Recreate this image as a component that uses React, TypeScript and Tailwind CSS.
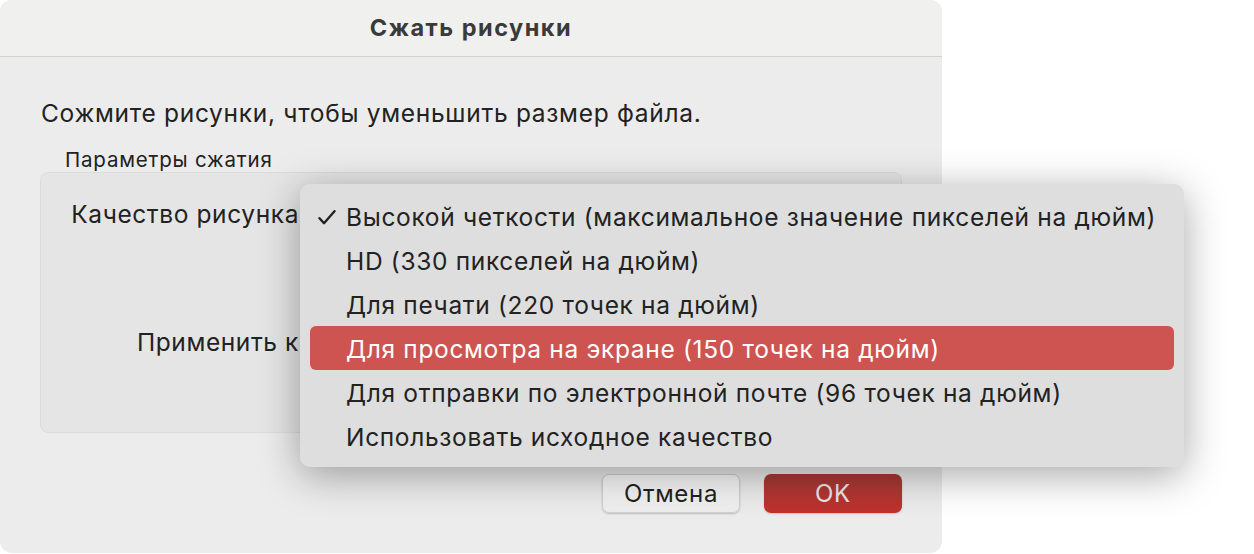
const items = [
  "Высокой четкости (максимальное значение пикселей на дюйм)",
  "HD (330 пикселей на дюйм)",
  "Для печати (220 точек на дюйм)",
  "Для просмотра на экране (150 точек на дюйм)",
  "Для отправки по электронной почте (96 точек на дюйм)",
  "Использовать исходное качество",
];

const font = "font-['Inter','Liberation_Sans',Arial,sans-serif]";

function CheckMark() {
  return (
    <svg width="18" height="15" viewBox="0 0 18 15" fill="none">
      <path
        d="M1.5 8.2 L6 13.2 L16.5 1.2"
        stroke="currentColor"
        strokeWidth="2.4"
        strokeLinecap="round"
        strokeLinejoin="round"
      />
    </svg>
  );
}

export default function App() {
  return (
    <div className={`relative h-[554px] w-[1254px] overflow-hidden bg-white text-[#222222] ${font}`}>
      <div className="flex h-[553px] w-[942px] flex-col overflow-hidden rounded-[12px] bg-[#ececec]">
        <div className="flex h-[57px] shrink-0 items-center justify-center border-b border-[#d2d2d2] bg-[#f0f0ef]">
          <span className="text-[23.5px] font-bold tracking-[1.5px] text-[#3a3a3a]">
            Сжать рисунки
          </span>
        </div>

        <div className="flex flex-1 flex-col px-[40px]">
          <p className="mt-[41px] pl-[1px] text-[24.5px] leading-[30px] tracking-[0.7px]">
            Сожмите рисунки, чтобы уменьшить размер файла.
          </p>

          <p className="mt-[20px] pl-[25px] text-[20.5px] leading-[24px] tracking-[0.8px]">
            Параметры сжатия
          </p>

          <div className="h-[261px] rounded-[8px] border border-[#dcdcdc] bg-[#e5e5e5]">
            <div className="mt-[26px] flex">
              <div className="w-[258px] text-right text-[24.5px] leading-[30px] tracking-[0.6px]">
                Качество рисунка
              </div>
            </div>
            <div className="mt-[98px] flex">
              <div className="w-[258px] text-right text-[24.5px] leading-[30px] tracking-[0.6px]">
                Применить к
              </div>
            </div>
          </div>

          <div className="mt-[41px] flex justify-end gap-[24px]">
            <button className="h-[39px] w-[138px] rounded-[7px] border border-[#d0d0d0] bg-gradient-to-b from-[#fbfbfb] to-[#ededed] text-[24px] tracking-[0.7px] text-[#222222] shadow-[0_1px_2px_rgba(0,0,0,0.2)]">
              Отмена
            </button>
            <button className="h-[39px] w-[138px] rounded-[7px] bg-gradient-to-b from-[#a63a38] to-[#c1302b] text-[24px] tracking-[0.7px] text-[#e9e9e9] shadow-[0_1px_2px_rgba(0,0,0,0.15)]">
              OK
            </button>
          </div>
        </div>
      </div>

      {/* popup menu over the dialog */}
      <div className="absolute left-[300px] top-[184px] h-[283px] w-[884px] rounded-[10px] bg-[#dedede] px-[10px] pt-[10px] shadow-[0_8px_40px_rgba(0,0,0,0.35)]">
        {items.map((item, i) => (
          <div
            key={item}
            className={
              i === 3
                ? "flex h-[44px] items-center rounded-[6px] bg-[#cd5451] text-white"
                : "flex h-[44px] items-center"
            }
          >
            <div className="flex w-[36px] justify-start pl-[8px] pt-[2px]">
              {i === 0 && <CheckMark />}
            </div>
            <span className="pt-[2px] text-[24.5px] leading-[30px] tracking-[0.67px]">
              {item}
            </span>
          </div>
        ))}
      </div>
    </div>
  );
}
